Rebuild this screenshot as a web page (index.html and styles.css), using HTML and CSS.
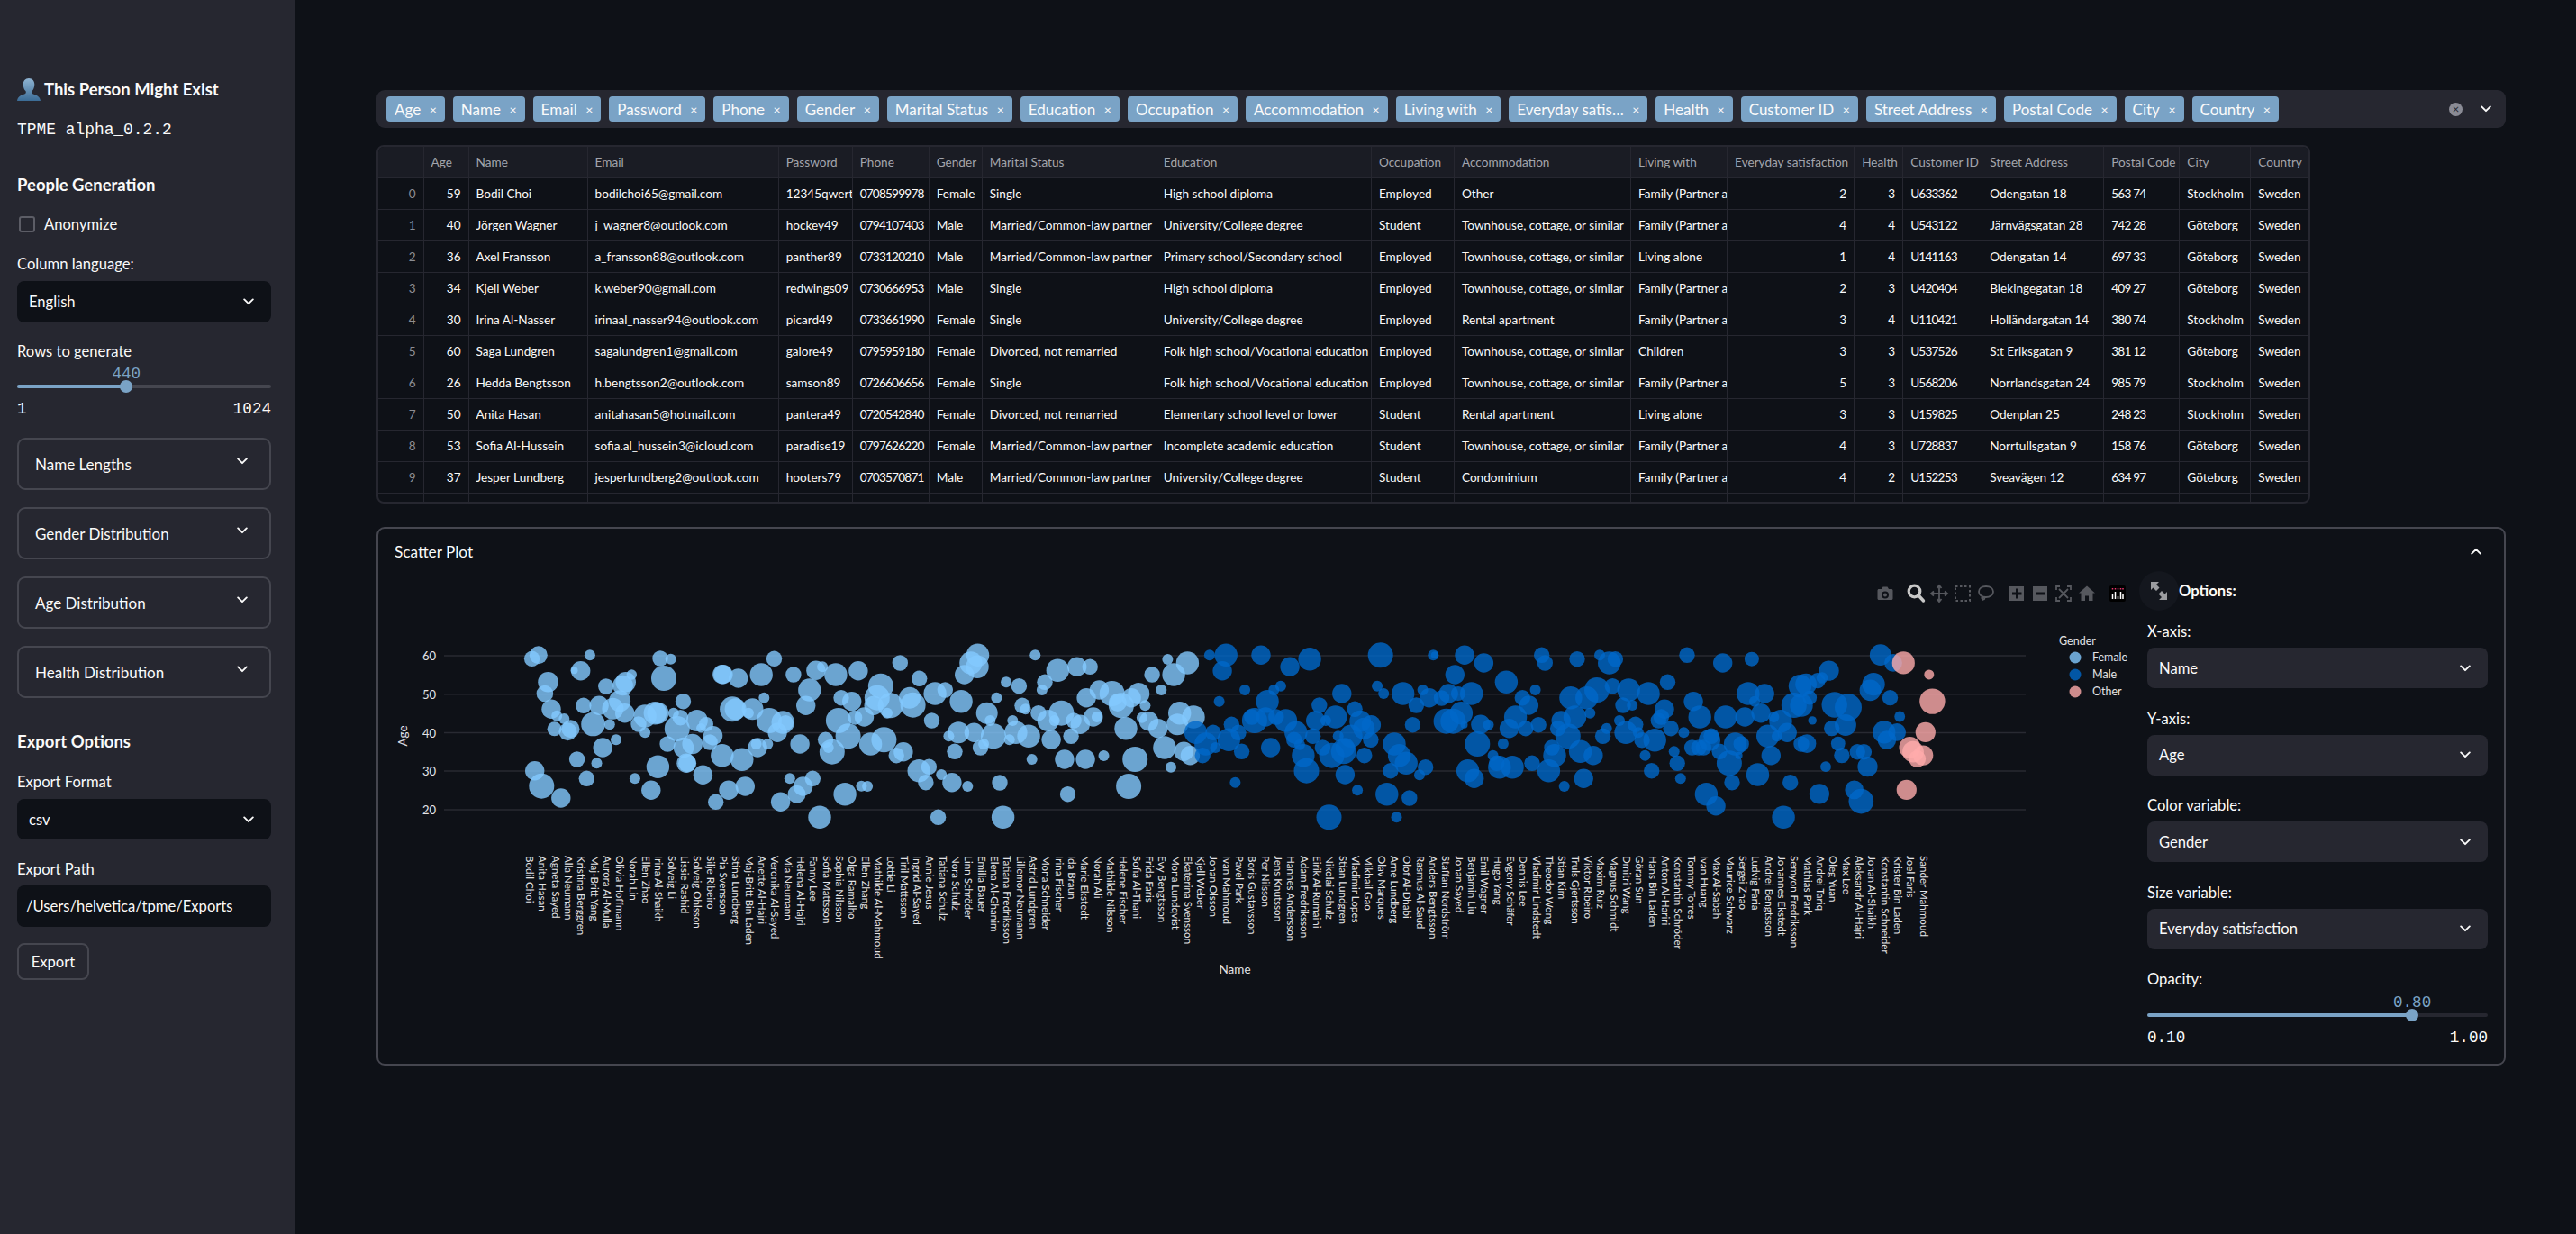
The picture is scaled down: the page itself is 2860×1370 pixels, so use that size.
FILE: index.html
```html
<!DOCTYPE html>
<html lang="en">

<head>
    <meta charset="UTF-8">
    <meta name="viewport" content="width=device-width, initial-scale=1.0">
    <title>This Person Might Exist</title>
    <link rel="stylesheet" href="styles.css">
</head>

<body>
    <svg class="defs" width="0" height="0">
        <symbol id="chev" viewBox="0 0 12 8">
            <path d="M1.2 1.4 6 6.2l4.8-4.8" fill="none" stroke="currentColor" stroke-width="1.9" stroke-linecap="round" stroke-linejoin="round" />
        </symbol>
    </svg>

    <div class="app">
        <aside class="sidebar">
            <h1 class="title">
                <svg class="person" viewBox="0 0 26 25">
                    <defs>
                        <linearGradient id="personFill" x1="0" y1="0" x2="0" y2="1">
                            <stop offset="0" stop-color="#8fb4d2" />
                            <stop offset="1" stop-color="#3b6c96" />
                        </linearGradient>
                    </defs>
                    <path fill="url(#personFill)" d="M13 0c4 0 6.300 3 6.300 6.800 0 3.200-1.300 6-2.900 7.500-.5 1.500-.2 2.600 1.500 3.300 3.300 1.300 7.400 2.300 8.100 7.400H0c.7-5.100 4.800-6.100 8.100-7.400 1.700-.7 2-1.800 1.500-3.300C8 12.800 6.700 10 6.700 6.800 6.700 3 9 0 13 0z" />
                </svg>
                This Person Might Exist
            </h1>
            <p class="version">TPME alpha_0.2.2</p>

            <h2 class="section section-people">People Generation</h2>
            <label class="check"><span class="box"></span>Anonymize</label>

            <div class="label label-language">Column language:</div>
            <div class="select side-select tall">English<svg class="chev"><use href="#chev" /></svg></div>

            <div class="label label-rows">Rows to generate</div>
            <div class="slider side-slider">
                <div class="track">
                    <div class="fill" style="width: 43%"></div>
                    <span class="thumb" style="left: 43%"></span>
                    <span class="value" style="left: 43%">440</span>
                </div>
                <div class="ticks"><span>1</span><span>1024</span></div>
            </div>

            <div class="expanders">
                <div class="expander">Name Lengths<svg class="chev"><use href="#chev" /></svg></div>
                <div class="expander">Gender Distribution<svg class="chev"><use href="#chev" /></svg></div>
                <div class="expander">Age Distribution<svg class="chev"><use href="#chev" /></svg></div>
                <div class="expander">Health Distribution<svg class="chev"><use href="#chev" /></svg></div>
            </div>

            <h2 class="section section-export">Export Options</h2>
            <div class="label label-format">Export Format</div>
            <div class="select side-select">csv<svg class="chev"><use href="#chev" /></svg></div>
            <div class="label label-path">Export Path</div>
            <div class="path-input">/Users/helvetica/tpme/Exports</div>
            <button class="export-btn">Export</button>
        </aside>

        <main class="main">
            <div class="multiselect">
                <span class="tag">Age<i>×</i></span>
                <span class="tag">Name<i>×</i></span>
                <span class="tag">Email<i>×</i></span>
                <span class="tag">Password<i>×</i></span>
                <span class="tag">Phone<i>×</i></span>
                <span class="tag">Gender<i>×</i></span>
                <span class="tag">Marital Status<i>×</i></span>
                <span class="tag">Education<i>×</i></span>
                <span class="tag">Occupation<i>×</i></span>
                <span class="tag">Accommodation<i>×</i></span>
                <span class="tag">Living with<i>×</i></span>
                <span class="tag">Everyday satis…<i>×</i></span>
                <span class="tag">Health<i>×</i></span>
                <span class="tag">Customer ID<i>×</i></span>
                <span class="tag">Street Address<i>×</i></span>
                <span class="tag">Postal Code<i>×</i></span>
                <span class="tag">City<i>×</i></span>
                <span class="tag">Country<i>×</i></span>
                <span class="clear">×</span>
                <svg class="chev chev-multi"><use href="#chev" /></svg>
            </div>

            <div class="table-wrap">
                <table class="data">
                    <colgroup>
                        <col class="w50"><col class="w50"><col class="w132"><col class="w212"><col class="w82"><col class="w85"><col class="w59"><col class="w193"><col class="w239"><col class="w92"><col class="w196"><col class="w107"><col class="w141"><col class="w54"><col class="w88"><col class="w135"><col class="w84"><col class="w79"><col class="w64">
                    </colgroup>
                    <thead>
                        <tr><th></th><th>Age</th><th>Name</th><th>Email</th><th>Password</th><th>Phone</th><th>Gender</th><th>Marital Status</th><th>Education</th><th>Occupation</th><th>Accommodation</th><th>Living with</th><th>Everyday satisfaction</th><th>Health</th><th>Customer ID</th><th>Street Address</th><th>Postal Code</th><th>City</th><th>Country</th></tr>
                    </thead>
                    <tbody>
                        <tr><td class="idx">0</td><td class="num">59</td><td>Bodil Choi</td><td>bodilchoi65@gmail.com</td><td>12345qwert5</td><td>0708599978</td><td>Female</td><td>Single</td><td>High school diploma</td><td>Employed</td><td>Other</td><td>Family (Partner and children)</td><td class="num">2</td><td class="num">3</td><td>U633362</td><td>Odengatan 18</td><td>563 74</td><td>Stockholm</td><td>Sweden</td></tr>
                        <tr><td class="idx">1</td><td class="num">40</td><td>Jörgen Wagner</td><td>j_wagner8@outlook.com</td><td>hockey49</td><td>0794107403</td><td>Male</td><td>Married/Common-law partner</td><td>University/College degree</td><td>Student</td><td>Townhouse, cottage, or similar</td><td>Family (Partner and children)</td><td class="num">4</td><td class="num">4</td><td>U543122</td><td>Järnvägsgatan 28</td><td>742 28</td><td>Göteborg</td><td>Sweden</td></tr>
                        <tr><td class="idx">2</td><td class="num">36</td><td>Axel Fransson</td><td>a_fransson88@outlook.com</td><td>panther89</td><td>0733120210</td><td>Male</td><td>Married/Common-law partner</td><td>Primary school/Secondary school</td><td>Employed</td><td>Townhouse, cottage, or similar</td><td>Living alone</td><td class="num">1</td><td class="num">4</td><td>U141163</td><td>Odengatan 14</td><td>697 33</td><td>Göteborg</td><td>Sweden</td></tr>
                        <tr><td class="idx">3</td><td class="num">34</td><td>Kjell Weber</td><td>k.weber90@gmail.com</td><td>redwings09</td><td>0730666953</td><td>Male</td><td>Single</td><td>High school diploma</td><td>Employed</td><td>Townhouse, cottage, or similar</td><td>Family (Partner and children)</td><td class="num">2</td><td class="num">3</td><td>U420404</td><td>Blekingegatan 18</td><td>409 27</td><td>Göteborg</td><td>Sweden</td></tr>
                        <tr><td class="idx">4</td><td class="num">30</td><td>Irina Al-Nasser</td><td>irinaal_nasser94@outlook.com</td><td>picard49</td><td>0733661990</td><td>Female</td><td>Single</td><td>University/College degree</td><td>Employed</td><td>Rental apartment</td><td>Family (Partner and children)</td><td class="num">3</td><td class="num">4</td><td>U110421</td><td>Holländargatan 14</td><td>380 74</td><td>Stockholm</td><td>Sweden</td></tr>
                        <tr><td class="idx">5</td><td class="num">60</td><td>Saga Lundgren</td><td>sagalundgren1@gmail.com</td><td>galore49</td><td>0795959180</td><td>Female</td><td>Divorced, not remarried</td><td>Folk high school/Vocational education</td><td>Employed</td><td>Townhouse, cottage, or similar</td><td>Children</td><td class="num">3</td><td class="num">3</td><td>U537526</td><td>S:t Eriksgatan 9</td><td>381 12</td><td>Göteborg</td><td>Sweden</td></tr>
                        <tr><td class="idx">6</td><td class="num">26</td><td>Hedda Bengtsson</td><td>h.bengtsson2@outlook.com</td><td>samson89</td><td>0726606656</td><td>Female</td><td>Single</td><td>Folk high school/Vocational education</td><td>Employed</td><td>Townhouse, cottage, or similar</td><td>Family (Partner and children)</td><td class="num">5</td><td class="num">3</td><td>U568206</td><td>Norrlandsgatan 24</td><td>985 79</td><td>Stockholm</td><td>Sweden</td></tr>
                        <tr><td class="idx">7</td><td class="num">50</td><td>Anita Hasan</td><td>anitahasan5@hotmail.com</td><td>pantera49</td><td>0720542840</td><td>Female</td><td>Divorced, not remarried</td><td>Elementary school level or lower</td><td>Student</td><td>Rental apartment</td><td>Living alone</td><td class="num">3</td><td class="num">3</td><td>U159825</td><td>Odenplan 25</td><td>248 23</td><td>Stockholm</td><td>Sweden</td></tr>
                        <tr><td class="idx">8</td><td class="num">53</td><td>Sofia Al-Hussein</td><td>sofia.al_hussein3@icloud.com</td><td>paradise19</td><td>0797626220</td><td>Female</td><td>Married/Common-law partner</td><td>Incomplete academic education</td><td>Student</td><td>Townhouse, cottage, or similar</td><td>Family (Partner and children)</td><td class="num">4</td><td class="num">3</td><td>U728837</td><td>Norrtullsgatan 9</td><td>158 76</td><td>Göteborg</td><td>Sweden</td></tr>
                        <tr><td class="idx">9</td><td class="num">37</td><td>Jesper Lundberg</td><td>jesperlundberg2@outlook.com</td><td>hooters79</td><td>0703570871</td><td>Male</td><td>Married/Common-law partner</td><td>University/College degree</td><td>Student</td><td>Condominium</td><td>Family (Partner and children)</td><td class="num">4</td><td class="num">2</td><td>U152253</td><td>Sveavägen 12</td><td>634 97</td><td>Göteborg</td><td>Sweden</td></tr>
                        <tr><td></td><td></td><td></td><td></td><td></td><td></td><td></td><td></td><td></td><td></td><td></td><td></td><td></td><td></td><td></td><td></td><td></td><td></td><td></td></tr>
                    </tbody>
                </table>
            </div>

            <section class="plot-panel">
                <div class="plot-head">
                    <span>Scatter Plot</span>
                    <svg class="chev chev-up"><use href="#chev" /></svg>
                </div>
                <div class="plot-body">
                    <!-- viewBox uses the page's own x/y so the points are easy to place -->
                    <svg id="chart" class="chart" viewBox="420 630 1950 550" width="1950" height="550">
                        <g class="modebar">
                            <path d="M2086 654h3l1.500-2.500h5l1.500 2.500h3c.8 0 1.500.7 1.500 1.500v9c0 .8-.7 1.500-1.500 1.500h-14c-.8 0-1.500-.7-1.500-1.500v-9c0-.8.7-1.500 1.500-1.500zm7 2.500a4 4 0 1 0 0 8 4 4 0 0 0 0-8zm0 2a2 2 0 1 1 0 4 2 2 0 0 1 0-4z" fill-rule="evenodd" />
                            <g class="active">
                                <circle cx="2125.500" cy="656.500" r="6.300" fill="none" stroke-width="3.200" />
                                <path d="M2130 661l5.500 6" fill="none" stroke-width="3.400" stroke-linecap="round" />
                            </g>
                            <path class="line" d="M2153 650v18M2144 659h18M2150.500 653l2.500-3 2.500 3M2150.500 665l2.500 3 2.500-3M2147 656.500l-3 2.500 3 2.500M2159 656.500l3 2.500-3 2.500" />
                            <rect class="dash" x="2171" y="651" width="16" height="16" />
                            <path class="line" d="M2205 651c5 0 8 2.500 8 6s-3.500 6-8 6c-4.500 0-8-2.500-8-6s3-6 8-6zM2201 662c-1.500 2-.5 3.500 1 3.500s2-1.500.5-2.500-1.500 2-.5 3.500" />
                            <path fill-rule="evenodd" d="M2231 651h16v16h-16zM2238 653.500v4h-4v3h4v4h2.500v-4h4v-3h-4v-4z" />
                            <path fill-rule="evenodd" d="M2257 651h16v16h-16zM2260 657.500v3h10v-3z" />
                            <path class="line" d="M2283 655v-4h4M2295 651h4v4M2299 663v4h-4M2287 667h-4v-4M2286 654l10 10M2296 654l-10 10" />
                            <path d="M2317 650.500l9 8h-2.500v8.500h-4.500v-5.500h-4v5.500h-4.500v-8.500h-2.500z" />
                            <rect x="2342" y="650" width="18" height="18" rx="2" fill="#000" />
                            <g class="logo-dots">
                                <path stroke="#e8356d" d="M2345.500 653v1.500M2348.500 653v1.500M2351.500 653v1.500M2354.500 653v1.500M2357 653v1.500" />
                                <path stroke="#fff" d="M2345.500 660v5M2348.500 657v8M2351.500 662v3M2354.500 657v8M2357 660v5" />
                            </g>
                        </g>
                        <g id="grid"></g>
                        <g id="bubbles"></g>
                        <g id="ticks"></g>
                        <text class="axis-title" transform="translate(452 817) rotate(-90)" text-anchor="middle">Age</text>
                        <text class="axis-title" x="1371" y="1081" text-anchor="middle">Name</text>
                        <g class="legend">
                            <text x="2286" y="716">Gender</text>
                            <circle cx="2304" cy="730" r="6.500" fill="#83c9ff" opacity="0.8" />
                            <text x="2323" y="734">Female</text>
                            <circle cx="2304" cy="749" r="6.500" fill="#0068c9" opacity="0.8" />
                            <text x="2323" y="753">Male</text>
                            <circle cx="2304" cy="768" r="6.500" fill="#ffabab" opacity="0.8" />
                            <text x="2323" y="772">Other</text>
                        </g>
                    </svg>

                    <div class="options">
                        <div class="options-head">
                            <span class="fullscreen">
                                <svg viewBox="0 0 44 44" width="44" height="44">
                                    <path d="M13 12h9l-3 3 3.500 3.500-3.500 3.500-3.500-3.500-2.500 2.500zM31 32h-9l3-3-3.500-3.500 3.500-3.500 3.500 3.500 2.500-2.500z" fill="#9b9ca0" />
                                </svg>
                            </span>
                            Options:
                        </div>
                        <div class="field">
                            <div class="field-label">X-axis:</div>
                            <div class="select">Name<svg class="chev"><use href="#chev" /></svg></div>
                        </div>
                        <div class="field">
                            <div class="field-label">Y-axis:</div>
                            <div class="select">Age<svg class="chev"><use href="#chev" /></svg></div>
                        </div>
                        <div class="field">
                            <div class="field-label">Color variable:</div>
                            <div class="select">Gender<svg class="chev"><use href="#chev" /></svg></div>
                        </div>
                        <div class="field">
                            <div class="field-label">Size variable:</div>
                            <div class="select">Everyday satisfaction<svg class="chev"><use href="#chev" /></svg></div>
                        </div>
                        <div class="field-label">Opacity:</div>
                        <div class="slider opacity-slider">
                            <div class="track">
                                <div class="fill" style="width: 77.8%"></div>
                                <span class="thumb" style="left: 77.8%"></span>
                                <span class="value" style="left: 77.8%">0.80</span>
                            </div>
                            <div class="ticks"><span>0.10</span><span>1.00</span></div>
                        </div>
                    </div>
                </div>
            </section>
        </main>
    </div>

    <script src="plot.js"></script>
</body>

</html>
```
FILE: styles.css
```css
/* Page */
body {
    margin: 0;
    font-family: "Lato", "Noto Sans", sans-serif;
    font-size: 16.600px;
    color: #fafafa;
    background-color: #0e1117;
}

.defs {
    position: absolute;
}

.app {
    display: flex;
    min-height: 100vh;
}

/* Sidebar */
.sidebar {
    width: 328px;
    flex-shrink: 0;
    box-sizing: border-box;
    padding: 84px 27px 0 19px;
    background-color: #262730;
}

.title {
    display: flex;
    align-items: center;
    gap: 4px;
    margin: 0;
    font-size: 18.500px;
    line-height: 30px;
    font-weight: 700;
}

.person {
    width: 26px;
    height: 25px;
}

.version {
    margin: 18px 0 0;
    font-family: "Liberation Mono", monospace;
    font-size: 17.900px;
    line-height: 24px;
}

.section {
    margin: 0;
    font-size: 18.500px;
    line-height: 28px;
    font-weight: 700;
}

.section-people {
    margin-top: 35px;
}

.section-export {
    margin-top: 34px;
}

.check {
    display: flex;
    align-items: center;
    gap: 10px;
    margin-top: 18px;
    line-height: 24px;
}

.box {
    width: 14px;
    height: 14px;
    margin-left: 2px;
    border: 2px solid #5c5d66;
    border-radius: 3px;
}

.label {
    font-size: 16.600px;
    line-height: 22px;
}

.label-language {
    margin-top: 21px;
}

.label-rows {
    margin-top: 21px;
}

.label-format {
    margin-top: 20px;
}

.label-path {
    margin-top: 22px;
}

/* Selects */
.select {
    display: flex;
    align-items: center;
    justify-content: space-between;
    height: 45px;
    padding: 0 19px 0 13px;
    border-radius: 8px;
    background-color: #262730;
}

.side-select {
    margin-top: 8px;
    background-color: #0e1117;
}

.tall {
    height: 46px;
}

.chev {
    width: 12px;
    height: 8px;
    color: #fafafa;
}

/* Sliders */
.track {
    position: relative;
    height: 4px;
    border-radius: 2px;
    background-color: #45464f;
}

.fill {
    height: 100%;
    border-radius: 2px;
    background-color: #7aa3c6;
}

.thumb {
    position: absolute;
    top: -5px;
    width: 14px;
    height: 14px;
    margin-left: -7px;
    border-radius: 50%;
    background-color: #7aa3c6;
}

.value {
    position: absolute;
    top: -22px;
    transform: translateX(-50%);
    font-family: "Liberation Mono", monospace;
    font-size: 17.600px;
    line-height: 20px;
    color: #7aa3c6;
}

.ticks {
    display: flex;
    justify-content: space-between;
    margin-top: 11px;
    font-family: "Liberation Mono", monospace;
    font-size: 17.600px;
    line-height: 24px;
}

.side-slider {
    margin-top: 26px;
}

.opacity-slider {
    margin-top: 26px;
}

.opacity-slider .track {
    background-color: #262730;
}

/* Sidebar expanders */
.expanders {
    display: flex;
    flex-direction: column;
    gap: 19px;
    margin-top: 20px;
}

.expander {
    display: flex;
    align-items: center;
    justify-content: space-between;
    box-sizing: border-box;
    height: 58px;
    padding: 0 24px 0 18px;
    border: 2px solid #45464f;
    border-radius: 9px;
    font-size: 17px;
}

.expander .chev {
    margin-top: -6px;
}

.path-input {
    display: flex;
    align-items: center;
    box-sizing: border-box;
    height: 46px;
    margin-top: 7px;
    padding-left: 10px;
    border-radius: 8px;
    background-color: #0e1117;
}

.export-btn {
    display: block;
    box-sizing: border-box;
    width: 80px;
    height: 41px;
    margin-top: 18px;
    padding: 0;
    border: 2px solid #45464f;
    border-radius: 8px;
    background-color: #262730;
    color: #fafafa;
    font-family: inherit;
    font-size: 16.600px;
}

/* Main column */
.main {
    flex: 1;
    min-width: 0;
    padding: 100px 78px 0 90px;
}

.multiselect {
    display: flex;
    align-items: center;
    gap: 9px;
    box-sizing: border-box;
    height: 42px;
    padding: 0 16px 0 11px;
    border-radius: 9px;
    background-color: #262730;
}

.tag {
    display: flex;
    align-items: center;
    flex-shrink: 0;
    height: 28px;
    padding: 0 9px;
    border-radius: 4px;
    background-color: #7aa3c6;
    font-size: 17px;
    white-space: nowrap;
}

.tag i {
    margin-left: 9.500px;
    font-style: normal;
    font-size: 14px;
}

.clear {
    display: flex;
    align-items: center;
    justify-content: center;
    width: 15px;
    height: 15px;
    margin-left: auto;
    margin-right: 11px;
    border-radius: 50%;
    background-color: #8a8b95;
    color: #262730;
    font-size: 13px;
    line-height: 1;
}

.chev-multi {
    flex-shrink: 0;
}

/* Table */
.table-wrap {
    box-sizing: border-box;
    width: fit-content;
    height: 398px;
    margin-top: 19px;
    border: 2px solid #262730;
    border-radius: 8px;
    overflow: hidden;
}

.data {
    table-layout: fixed;
    width: 2143px;
    border-collapse: collapse;
    font-size: 13.600px;
}

.w50 { width: 50px; }
.w54 { width: 54px; }
.w59 { width: 59px; }
.w64 { width: 64px; }
.w79 { width: 79px; }
.w82 { width: 82px; }
.w84 { width: 84px; }
.w85 { width: 85px; }
.w88 { width: 88px; }
.w92 { width: 92px; }
.w107 { width: 107px; }
.w132 { width: 132px; }
.w135 { width: 135px; }
.w141 { width: 141px; }
.w193 { width: 193px; }
.w196 { width: 196px; }
.w212 { width: 212px; }
.w239 { width: 239px; }

.data th,
.data td {
    box-sizing: border-box;
    height: 35px;
    padding: 0 8px;
    border-right: 1px solid #262730;
    border-bottom: 1px solid #262730;
    overflow: hidden;
    white-space: nowrap;
}

.data th:last-child,
.data td:last-child {
    border-right: none;
}

.data th {
    height: 34px;
    background-color: #1a1c24;
    color: #a3a5ad;
    font-weight: 400;
    text-align: left;
}

.data .num,
.data .idx {
    text-align: right;
}

.data .idx {
    color: #8b8d94;
}

.data td:nth-child(6),
.data td:nth-child(15),
.data td:nth-child(17) {
    letter-spacing: -0.8px;
}

/* Scatter plot panel */
.plot-panel {
    box-sizing: border-box;
    height: 598px;
    margin-top: 26px;
    border: 2px solid #45464f;
    border-radius: 9px;
}

.plot-head {
    display: flex;
    align-items: center;
    justify-content: space-between;
    height: 50px;
    padding: 0 25px 0 18px;
    font-size: 17.200px;
}

.chev-up {
    transform: rotate(180deg);
}

.plot-body {
    display: flex;
    margin-top: -7px;
}

.chart {
    flex-shrink: 0;
}

.modebar {
    fill: #56585e;
}

.modebar .active {
    stroke: #c8c8c8;
}

.modebar .line {
    fill: none;
    stroke: #56585e;
    stroke-width: 1.800;
}

.modebar .dash {
    fill: none;
    stroke: #56585e;
    stroke-width: 2;
    stroke-dasharray: 2.500 2.500;
}

.logo-dots path {
    fill: none;
    stroke-width: 1.500;
}

.grid-line {
    stroke: #282a32;
    stroke-width: 1.500;
}

.tick {
    fill: #e3e3e6;
    font-size: 13px;
}

.name-tick {
    fill: #e3e3e6;
    font-size: 11.600px;
}

.axis-title {
    fill: #e3e3e6;
    font-size: 13.500px;
}

.legend text {
    fill: #e3e3e6;
    font-size: 12.500px;
}

/* Options column */
.options {
    width: 378px;
    margin-left: 14px;
    padding-top: 4px;
}

.options-head {
    display: flex;
    align-items: center;
    height: 44px;
    margin: 0 0 11px -9px;
    font-weight: 700;
}

.fullscreen {
    display: flex;
    width: 44px;
    height: 44px;
    border-radius: 50%;
    background-color: #14171e;
}

.field {
    margin-bottom: 21.500px;
}

.field-label {
    line-height: 24px;
    margin-bottom: 6px;
}
```
FILE: plot.js
```js
const NS = 'http://www.w3.org/2000/svg';

function addEl(parent, tag, attrs, text) {
    const el = document.createElementNS(NS, tag);
    for (const key in attrs) {
        el.setAttribute(key, attrs[key]);
    }
    if (text) {
        el.textContent = text;
    }
    parent.appendChild(el);
    return el;
}

// y axis
const ageY = { 60: 728, 50: 770.800, 40: 813.500, 30: 856, 20: 899 };
const grid = document.getElementById('grid');
for (const age in ageY) {
    addEl(grid, 'line', { x1: 493, x2: 2249, y1: ageY[age], y2: ageY[age], class: 'grid-line' });
    addEl(grid, 'text', { x: 484, y: ageY[age] + 5, 'text-anchor': 'end', class: 'tick' }, age);
}

// x axis names, only every third one is labelled
const names = ['Bodil Choi', 'Anita Hasan', 'Agneta Sayed', 'Alla Neumann', 'Kristina Berggren', 'Maj-Britt Yang', 'Aurora Al-Mulla', 'Olivia Hoffmann', 'Norah Lin', 'Ellen Zhao', 'Irina Al-Shaikh', 'Solveig Li', 'Lissie Rashid', 'Solveig Ohlsson', 'Silje Ribeiro', 'Pia Svensson', 'Stina Lundberg', 'Maj-Britt Bin Laden', 'Anette Al-Hajri', 'Veronika Al-Sayed', 'Mia Neumann', 'Helena Al-Hajri', 'Fanny Lee', 'Sofia Mattsson', 'Sophia Nilsson', 'Olga Ramalho', 'Ellen Zhang', 'Mathilde Al-Mahmoud', 'Lottie Li', 'Tiril Mattsson', 'Ingrid Al-Sayed', 'Annie Jesus', 'Tatiana Schulz', 'Nora Schulz', 'Linn Schröder', 'Emilia Bauer', 'Elena Al-Ghanim', 'Tatiana Fredriksson', 'Lillemor Neumann', 'Astrid Lundgren', 'Mona Schneider', 'Irina Fischer', 'Ida Braun', 'Marie Ekstedt', 'Norah Ali', 'Mathilde Nilsson', 'Helene Fischer', 'Sofia Al-Thani', 'Frida Faris', 'Evy Bengtsson', 'Mona Lundqvist', 'Ekaterina Svensson', 'Kjell Weber', 'Johan Olsson', 'Ivan Mahmoud', 'Pavel Park', 'Boris Gustavsson', 'Per Nilsson', 'Jens Knutsson', 'Hannes Andersson', 'Adam Fredriksson', 'Eirik Al-Rumaihi', 'Nikolai Schulz', 'Stian Lundgren', 'Vladimir Lopes', 'Mikhail Gao', 'Olav Marques', 'Arne Lundberg', 'Olof Al-Dhabi', 'Rasmus Al-Saud', 'Anders Bengtsson', 'Staffan Nordström', 'Johan Sayed', 'Benjamin Liu', 'Emil Wagner', 'Hugo Yang', 'Evgeny Schäfer', 'Dennis Lee', 'Vladimir Lindstedt', 'Theodor Wong', 'Stian Kim', 'Truls Gjertsson', 'Viktor Ribeiro', 'Maxim Ruiz', 'Magnus Schmidt', 'Dmitri Wang', 'Göran Sun', 'Hans Bin Laden', 'Anton Al-Hariri', 'Konstantin Schröder', 'Tommy Torres', 'Ivan Huang', 'Max Al-Sabah', 'Maurice Schwarz', 'Sergei Zhao', 'Ludvig Faria', 'Andrei Bengtsson', 'Johannes Ekstedt', 'Semyon Fredriksson', 'Mathias Park', 'Andrei Tariq', 'Oleg Yuan', 'Max Lee', 'Aleksandr Al-Hajri', 'Johan Al-Shaikh', 'Konstantin Schneider', 'Krister Bin Laden', 'Joel Faris', 'Sander Mahmoud'];
const ticks = document.getElementById('ticks');
names.forEach(function (name, i) {
    const x = 584 + i * 14.330;
    addEl(ticks, 'text', { transform: `translate(${x} 950) rotate(90)`, class: 'name-tick' }, name);
});

// [x, y, r] with x in half pixels from ox, y and r in thirds of a pixel
const female1 = [[354,154,26],[368,142,30],[389,232,34],[382,270,28],[396,322,32],[408,344,18],[424,354,18],[403,388,24],[438,388,30],[432,397,30],[446,193,12],[460,194,32],[480,142,18],[466,310,26],[500,310,32],[487,372,40],[523,373,18],[515,246,26],[530,320,36],[545,295,36],[552,243,34],[571,207,17],[558,232,34],[556,335,32],[537,424,18],[508,450,32],[495,502,18],[452,489,26],[473,553,26],[360,527,32],[375,578,42],[417,618,32],[578,553,18],[613,592,32],[628,514,38],[600,400,18],[586,372,26],[600,345,38],[622,335,38],[628,335,36],[633,153,26],[656,155,18],[641,219,42],[662,335,18],[677,350,26],[670,387,42],[649,438,26],[683,296,26],[684,450,34],[703,438,34],[690,502,32],[692,502,30],[726,541,32],[713,360,36],[733,372,24],[722,385,16],[748,410,32],[741,432,26],[768,476,38],[811,490,38],[754,631,26],[782,592,32],[818,579,32],[768,206,32],[770,206,32],[803,219,32],[853,207,38],[859,284,18],[790,322,42],[797,322,36],[825,335,18],[834,322,36],[870,360,42],[888,400,32],[900,366,38],[906,368,26],[845,450,32],[842,438,18],[867,438,18],[881,154,26],[923,207,26],[958,258,38],[950,310,32],[937,438,32],[915,553,18],[965,553,26],[944,579,32],[930,605,30],[895,631,32],[980,682,38],[972,193,32],[986,181,18],[1015,207,38],[1027,284,26],[1050,296,32],[1021,360,42],[1042,412,42],[993,424,26],[1007,464,42],[999,450,18],[1064,194,32],[1057,350,24],[1077,348,32],[1035,605,38],[1071,578,18],[1084,579,18],[1113,245,42],[1105,284,42],[1098,310,32],[1134,310,42],[1127,335,18],[1091,438,38],[1120,424,42],[1155,168,26],[1197,220,26],[1176,284,36],[1183,308,42],[1231,270,38],[1253,258,26],[1224,360,26],[1288,296,38],[1147,476,26],[1162,464,32],[1196,527,38],[1218,514,26],[1211,566,26],[1245,540,18],[1268,566,32],[1302,579,18],[1238,682,26],[1261,412,18],[1282,400,36],[1274,463,26],[1316,400,32],[1358,412,42],[1344,335,36],[1330,450,26],[1337,438,18],[1379,682,38],[1372,567,26],[1351,360,18],[1365,284,18],[1295,207,32],[1309,168,38],[1324,142,38],[1323,181,38],[1386,232,18],[1414,245,26],[1400,360,18],[1393,424,18],[1407,400,38],[1421,310,26],[1428,322,18],[1435,412,38],[1442,489,18],[1449,142,18],[1456,335,26],[1464,258,18],[1470,232,26],[1477,360,36],[1484,424,32],[1498,193,38],[1491,360,18],[1506,335,42],[1513,489,32],[1520,605,26],[1527,412,26],[1533,360,26],[1540,181,32],[1547,373,32]];
const female2 = [[20,181,26],[12,284,32],[40,258,32],[68,270,42],[27,348,32],[35,348,18],[98,386,38],[88,310,42],[80,300,30],[110,284,32],[126,270,36],[140,310,18],[133,350,18],[148,362,32],[168,386,32],[155,207,26],[175,258,18],[189,156,18],[202,207,38],[232,168,38],[215,335,38],[245,348,38],[210,373,36],[182,450,38],[224,463,32],[238,476,32],[118,489,42],[10,489,32],[50,477,18],[196,515,18],[104,579,42]];
const male1 = [[280,142,18],[316,142,38],[308,194,32],[392,142,32],[455,181,32],[498,155,38],[435,245,18],[420,258,18],[357,258,18],[301,296,18],[406,296,38],[328,373,26],[372,348,26],[378,360,42],[402,348,32],[425,348,26],[446,360,38],[250,400,38],[288,400,26],[343,400,26],[322,424,38],[272,438,38],[293,450,18],[265,476,26],[350,463,26],[413,450,32],[468,400,38],[464,424,26],[476,440,18],[505,412,26],[519,309,26],[511,360,32],[533,360,18],[554,348,38],[568,270,32],[596,322,26],[608,362,36],[632,374,32],[616,386,36],[588,412,38],[560,412,18],[631,424,26],[526,450,26],[575,450,32],[572,463,42],[546,476,42],[484,476,38],[491,527,42],[617,476,26],[575,540,32],[602,592,18],[666,605,38],[715,618,26],[540,682,42],[687,682,18],[336,566,18],[645,245,18],[659,270,18],[701,270,38],[652,142,42],[767,142,18],[770,142,12],[835,142,32],[877,168,32],[814,207,32],[744,258,18],[758,284,32],[730,309,26],[785,285,26],[800,270,32],[821,270,24],[850,270,38],[722,374,26],[795,362,42],[810,362,42],[828,335,38],[834,374,12],[870,373,32],[887,374,18],[863,438,42],[682,438,38],[693,476,38],[708,502,38],[750,515,26],[737,541,18],[674,527,26],[842,527,38],[856,553,32],[897,476,18],[919,437,18],[911,515,38],[905,502,26],[939,515,38],[982,502,26],[1018,527,38],[1031,476,38],[1025,450,26],[926,232,38],[961,284,26],[975,309,32],[946,348,38],[932,386,32],[968,386,26],[996,374,26],[989,258,18],[1003,142,26],[1010,168,26],[1080,155,26],[1129,142,18],[1150,168,38],[1163,155,26],[1066,284,38],[1101,284,38],[1123,258,42],[1157,245,26],[1192,258,38],[1235,270,38],[1277,232,26],[1108,335,18],[1075,348,38],[1045,360,32],[1038,386,26],[1060,412,42],[1087,463,38],[1115,476,32],[1094,553,32],[1052,579,18],[1319,142,26],[1397,168,32],[1460,155,24],[1333,296,32],[1347,348,38],[1403,348,38],[1445,348,32],[1452,270,38],[1488,270,32],[1466,296,18],[1480,335,32],[1508,348,18],[1565,245,38],[1552,309,42],[1568,309,38],[1523,362,38],[1537,400,32],[1495,412,38],[1515,412,18],[1502,476,32],[1568,438,26],[1180,309,26],[1200,309,18],[1172,360,18],[1144,386,18],[1136,412,26],[1186,400,38],[1207,373,26],[1213,400,18],[1221,425,26],[1249,425,38],[1263,348,26],[1270,322,32],[1257,360,26],[1284,386,26],[1312,400,18],[1291,463,18],[1228,476,18],[1298,502,26],[1242,527,26],[1305,553,18],[1330,450,26],[1345,450,26],[1355,450,26],[1372,412,26],[1368,425,36],[1390,463,26],[1424,438,38],[1437,438,26],[1432,476,12],[1411,502,42],[1473,540,38],[1417,566,26],[1544,566,26],[1361,605,38],[1382,644,32],[1529,682,38]];
// these two were read with a different vertical scale
const male2 = [[10,480,30],[35,470,22],[60,442,28],[45,462,16],[18,518,20],[72,538,36],[102,545,38],[96,595,30],[66,604,22],[24,582,12],[12,647,26],[80,647,20],[88,680,22],[122,670,22],[136,670,22],[53,712,15],[144,712,28],[172,398,30],[200,420,25],[157,480,32],[150,497,30],[193,518,22],[214,571,15],[180,615,32],[186,637,26],[208,615,25],[115,777,26],[130,809,35],[39,788,28]];
const other = [[222,420,32],[278,453,14],[285,528,36],[270,615,28],[236,658,30],[243,670,30],[265,680,28],[252,690,24],[229,777,28]];

const bubbles = document.getElementById('bubbles');

function drawPoints(points, color, ox, oy, yScale) {
    points.forEach(function (p) {
        addEl(bubbles, 'circle', {
            cx: (ox + p[0] * 0.5102).toFixed(1),
            cy: (oy + p[1] * yScale).toFixed(1),
            r: (p[2] * yScale).toFixed(1),
            fill: color,
            opacity: 0.8
        });
    });
}

drawPoints(female1, '#83c9ff', 410, 680, 1 / 3);
drawPoints(female2, '#83c9ff', 1200, 680, 1 / 3);
drawPoints(male1, '#0068c9', 1200, 680, 1 / 3);
drawPoints(male2, '#0068c9', 2000, 570, 0.395);
drawPoints(other, '#ffabab', 2000, 570, 0.395);
```
